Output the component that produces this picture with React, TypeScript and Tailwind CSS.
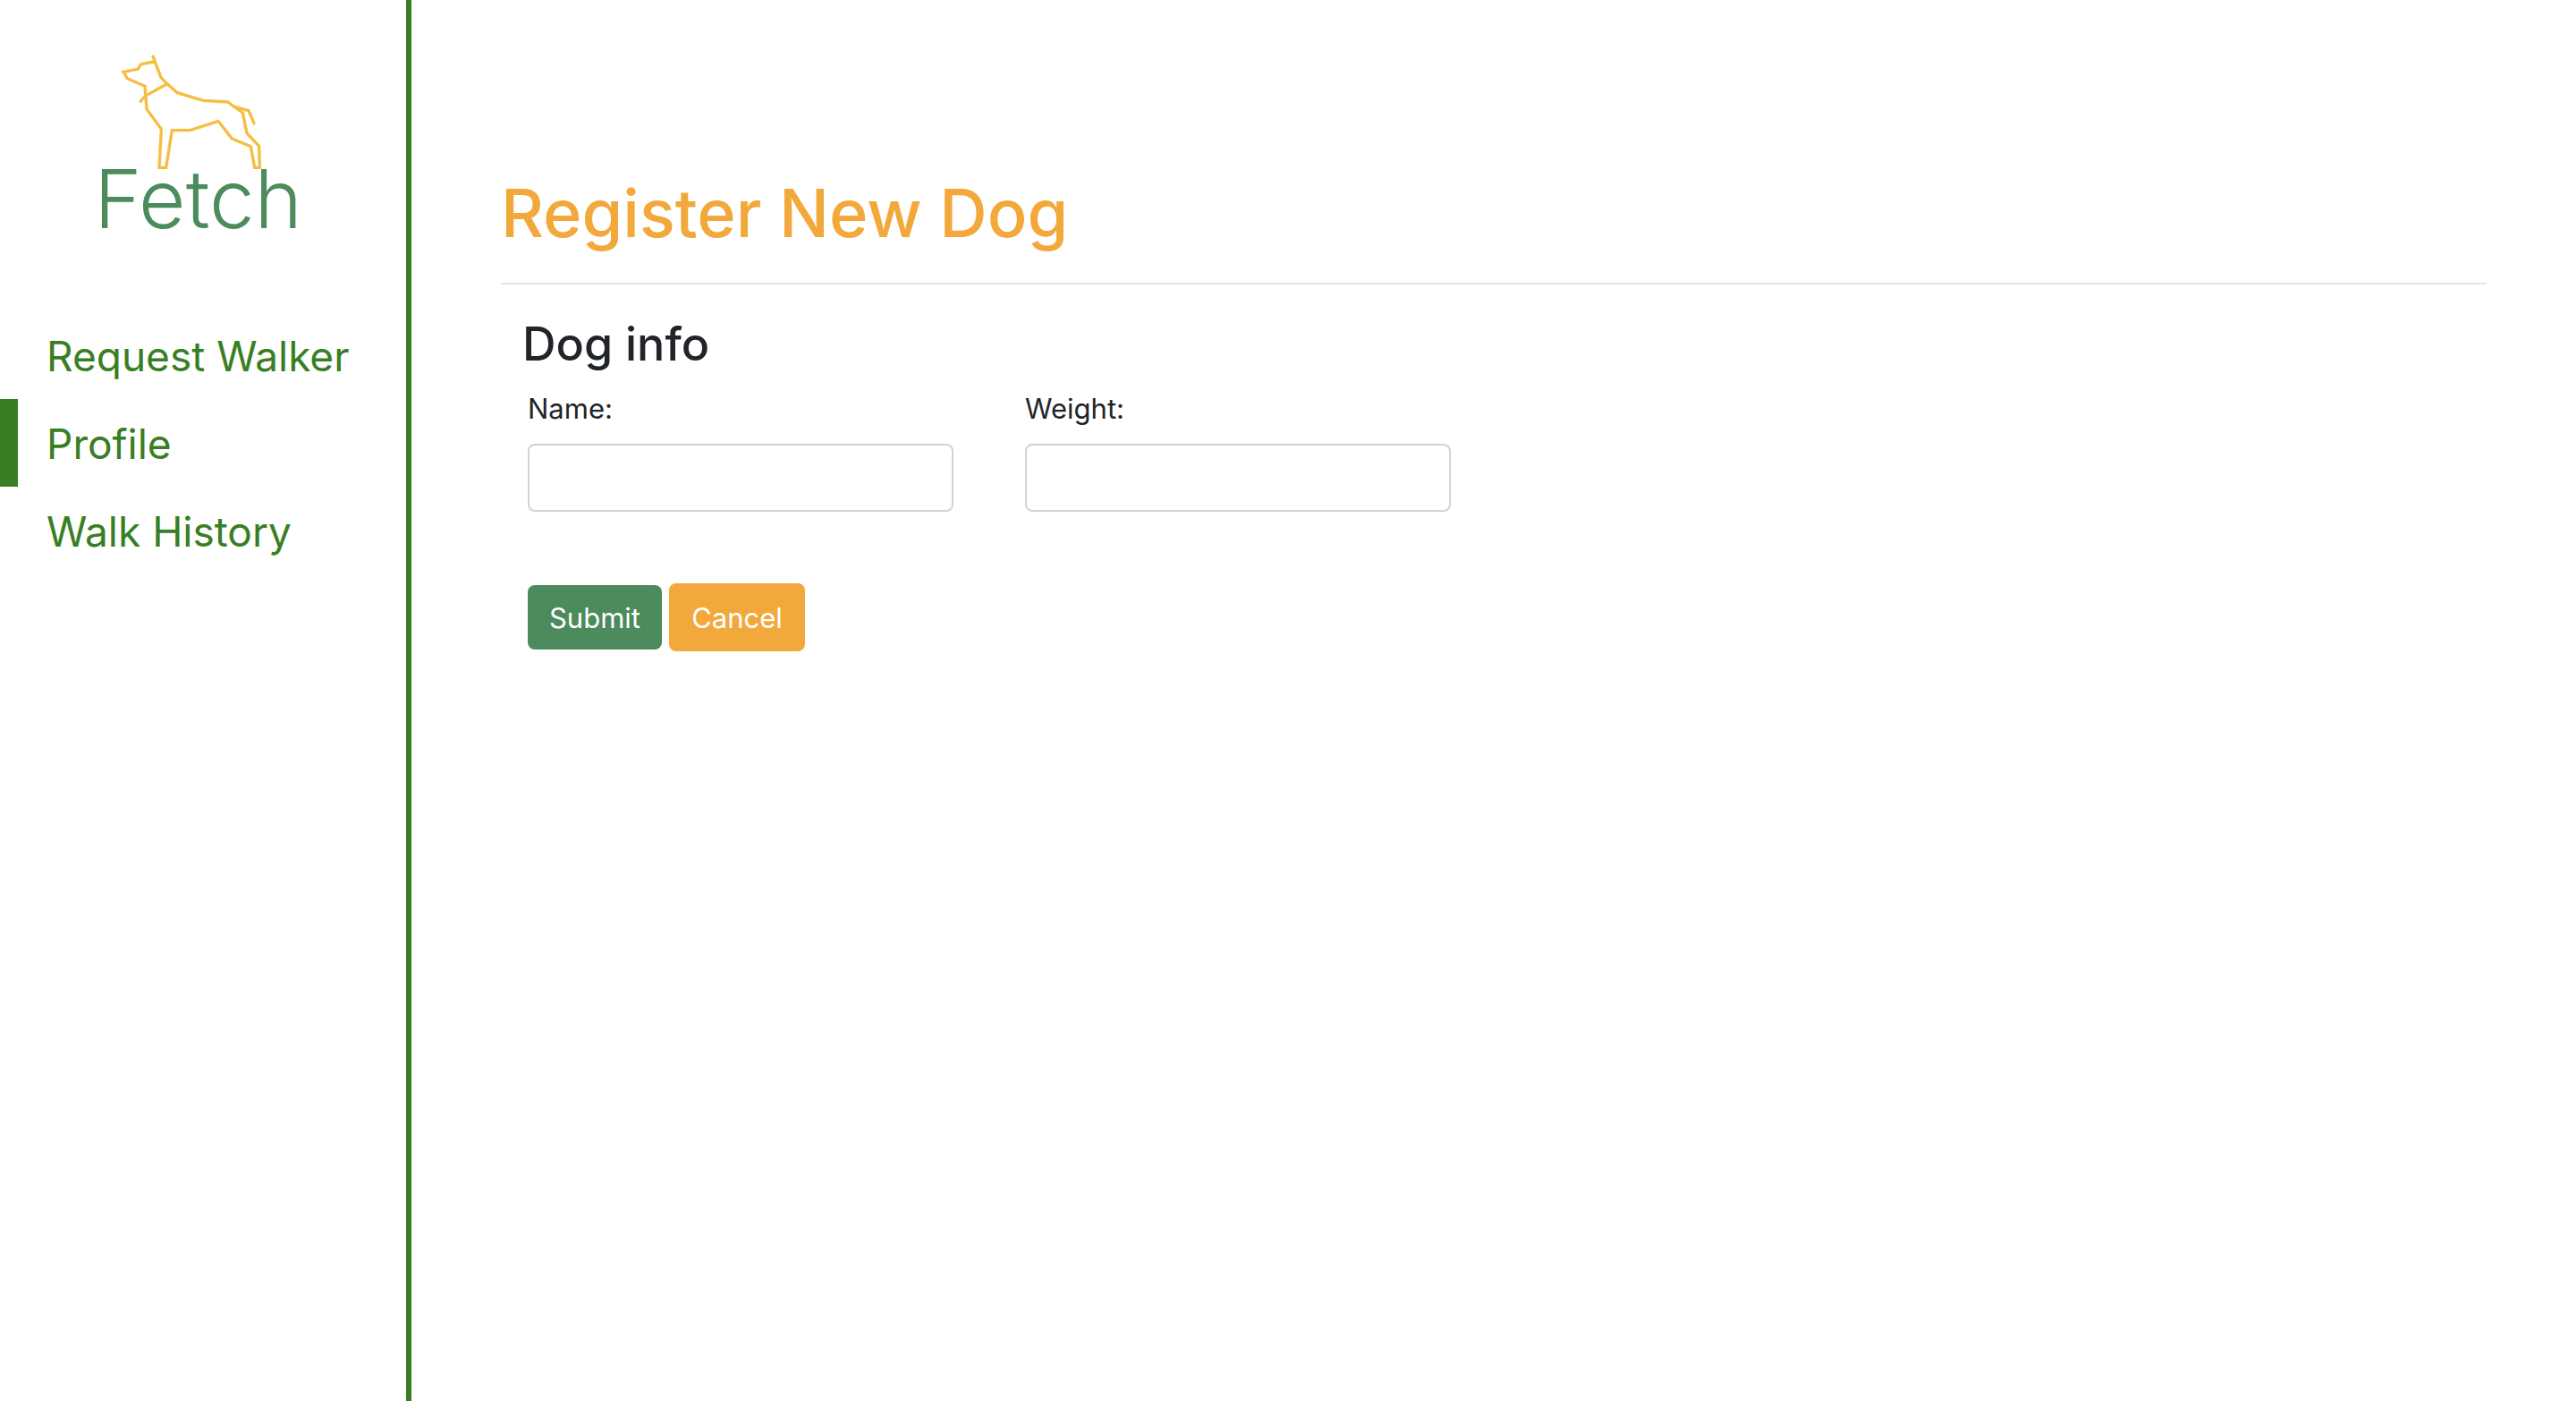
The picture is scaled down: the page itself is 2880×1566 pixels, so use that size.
import React from "react";

const navItems = [
  { label: "Request Walker", active: false },
  { label: "Profile", active: true },
  { label: "Walk History", active: false },
];

function Logo() {
  return (
    <svg
      viewBox="6 0 810 720"
      className="h-[240px] w-[270px]"
      role="img"
      aria-label="Fetch"
    >
      <g
        fill="none"
        stroke="#f6be41"
        strokeWidth="10"
        strokeLinejoin="miter"
        strokeLinecap="round"
      >
        <path d="M243 69L270 140L291 161L325 191L411 217L494 222L514 237L544 258L558 327L599 370L601 442H584L571 371L508 345L462 286L368 317H307L287 442H264L271 313L222 246L216 169L157 143L144 121L192 112L203 95L248 87" />
        <path d="M291 161L218 201L201 220" />
        <path d="M514 237L564 251L582 293" />
      </g>
      <text
        x="46"
        y="645"
        fill="#4b8b5c"
        fontSize="272"
        className="font-['Inter'] font-[360]"
      >
        Fetch
      </text>
    </svg>
  );
}

function Sidebar() {
  return (
    <aside className="flex w-[460px] shrink-0 flex-col border-r-[6px] border-[#387e22] pt-10">
      <a href="#home" className="self-center">
        <Logo />
      </a>
      <nav className="mt-[68px]">
        <ul>
          {navItems.map((item) => (
            <li key={item.label}>
              <a
                href="#"
                aria-current={item.active ? "page" : undefined}
                className={`block border-l-[20px] pt-[13px] pb-[11px] pl-8 text-[46px] leading-[74px] whitespace-nowrap text-[#387e22] ${
                  item.active ? "border-[#387e22]" : "border-transparent"
                }`}
              >
                {item.label}
              </a>
            </li>
          ))}
        </ul>
      </nav>
    </aside>
  );
}

function Field({ id, label }: { id: string; label: string }) {
  return (
    <div className="w-[476px]">
      <label htmlFor={id} className="block leading-[50px]">
        {label}
      </label>
      <input
        id={id}
        type="text"
        className="mt-[14px] block h-[76px] w-full rounded-lg border-2 border-[#ced4da] bg-white px-6"
      />
    </div>
  );
}

export default function App() {
  return (
    <div className="flex min-h-screen bg-white font-['Inter',sans-serif] text-[31px] text-[#212529]">
      <Sidebar />
      <main className="flex-1 px-[100px] pt-[190px]">
        <h1 className="border-b-2 border-[#e5e5e5] pb-[30px] text-[74px] leading-[96px] font-medium text-[#f2a83b]">
          Register New Dog
        </h1>
        <form className="pt-8 pl-[30px]" onSubmit={(e) => e.preventDefault()}>
          <h2 className="-ml-1.5 text-[52px] leading-[70px] font-medium">
            Dog info
          </h2>
          <div className="mt-3 flex gap-20">
            <Field id="dog-name" label="Name:" />
            <Field id="dog-weight" label="Weight:" />
          </div>
          <div className="mt-20 flex items-center gap-2">
            <button
              type="submit"
              className="h-[72px] w-[150px] rounded-lg bg-[#4b8b5c] pt-0.5 text-white"
            >
              Submit
            </button>
            <button
              type="button"
              className="h-[76px] w-[152px] rounded-lg bg-[#f2a83b] pt-0.5 text-white"
            >
              Cancel
            </button>
          </div>
        </form>
      </main>
    </div>
  );
}
